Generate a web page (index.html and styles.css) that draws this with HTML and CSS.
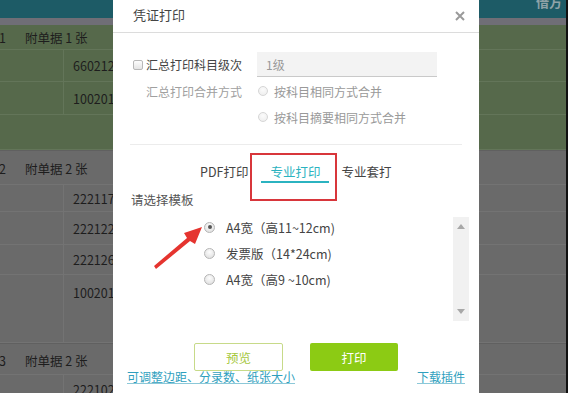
FILE: index.html
```html
<!DOCTYPE html>
<html lang="zh-CN">
<head>
<meta charset="utf-8">
<title>凭证打印</title>
<link rel="stylesheet" href="styles.css">
</head>
<body>
<div class="screen">
  <div class="bg">
    <div class="topbar"><span class="hdr-txt">借方</span></div>
    <div class="band"></div>
    <div class="grp green">
      <div class="ghead g1"><span class="vno">01</span>附单据 1 张</div>
      <div class="row r32"><div class="c1"></div><div class="c2">660212</div></div>
      <div class="row r33"><div class="c1"></div><div class="c2">100201</div></div>
      <div class="row r35"><div class="c1 noline"></div><div class="c2"></div></div>
    </div>
    <div class="grp grey">
      <div class="ghead g2"><span class="vno">02</span>附单据 2 张</div>
      <div class="row r27"><div class="c1"></div><div class="c2">222117</div></div>
      <div class="row r33"><div class="c1"></div><div class="c2">222122</div></div>
      <div class="row r30"><div class="c1"></div><div class="c2">222126</div></div>
      <div class="row r68"><div class="c1"></div><div class="c2 top">100201</div></div>
      <div class="ghead g3"><span class="vno">03</span>附单据 2 张</div>
      <div class="row r30"><div class="c1"></div><div class="c2">222102</div></div>
    </div>
  </div>

  <div class="dialog">
    <div class="dlg-head">
      <span class="dlg-title">凭证打印</span>
      <svg class="close" width="10" height="10" viewBox="0 0 10 10"><path d="M1 1 L9 9 M9 1 L1 9" stroke="#9a9a9a" stroke-width="2" fill="none"/></svg>
    </div>

    <div class="form">
      <div class="frow first">
        <span class="chk"></span>
        <span class="flabel">汇总打印科目级次</span>
        <div class="select">1级</div>
      </div>
      <div class="frow">
        <span class="flabel dim">汇总打印合并方式</span>
        <span class="radio dis"></span><span class="rtext">按科目相同方式合并</span>
      </div>
      <div class="frow">
        <span class="flabel dim"></span>
        <span class="radio dis"></span><span class="rtext">按科目摘要相同方式合并</span>
      </div>
    </div>

    <div class="sep"></div>

    <div class="tabs">
      <span class="tab t1">PDF打印</span>
      <span class="tab t2 active">专业打印</span>
      <span class="tab t3">专业套打</span>
    </div>

    <div class="choose">请选择模板</div>

    <div class="list">
      <div class="opts">
        <div class="opt"><span class="radio on"></span><span class="otext">A4宽（高11~12cm)</span></div>
        <div class="opt"><span class="radio"></span><span class="otext">发票版（14*24cm)</span></div>
        <div class="opt"><span class="radio"></span><span class="otext">A4宽（高9 ~10cm)</span></div>
      </div>
      <div class="scrollbar">
        <svg width="8" height="5" viewBox="0 0 8 5"><path d="M0 5 L4 0 L8 5 Z" fill="#a8a8a8"/></svg>
        <svg width="8" height="5" viewBox="0 0 8 5"><path d="M0 0 L8 0 L4 5 Z" fill="#a8a8a8"/></svg>
      </div>
    </div>

    <div class="btns">
      <span class="btn preview">预览</span>
      <span class="btn print">打印</span>
    </div>

    <div class="links">
      <span class="link">可调整边距、分录数、纸张大小</span>
      <span class="link">下载插件</span>
    </div>

    <div class="redbox"></div>
  </div>

  <svg class="arrow" width="568" height="393" viewBox="0 0 568 393">
    <polygon points="154,266 187,238 184,233 202,227 195,244 190,241 156,269" fill="#e5342f"/>
  </svg>
</div>
</body>
</html>
```

FILE: styles.css
```css
* { box-sizing: border-box; }
html, body { margin: 0; padding: 0; }
body {
  font-family: "Noto Sans CJK SC", "Noto Sans", sans-serif;
  background: #6a6a6a;
}
.screen {
  position: relative;
  width: 568px;
  height: 393px;
  overflow: hidden;
  border-right: 2px solid #111;
}

/* background table */
.bg { width: 100%; }
.topbar {
  height: 18px;
  background: #1d5b66;
  position: relative;
  overflow: hidden;
  display: flex;
  justify-content: flex-end;
}
.hdr-txt {
  color: #8fa3a8;
  font-size: 13px;
  font-weight: bold;
  line-height: 13px;
  margin-top: -5px;
  margin-right: 4px;
}
.band { height: 7px; background: #6f6e76; }
.grp.green { background: #56694b; }
.grp.grey { background: #6a6a6a; }
.ghead {
  display: flex;
  align-items: center;
  font-size: 12.5px;
  color: #1d1d1d;
}
.green .ghead { border-bottom: 1px solid #637559; }
.grey .ghead { border-top: 1px solid #606060; border-bottom: 1px solid #737373; }
.g1 { height: 25px; }
.g2 { height: 35px; padding-top: 2px; }
.g3 { height: 32px; padding-top: 2px; }
.vno { margin-left: -8px; width: 33px; }
.row { display: flex; }
.green .row { border-bottom: 1px solid #637559; }
.grey .row { border-bottom: 1px solid #737373; }
.r27 { height: 27px; }
.r30 { height: 30px; }
.r32 { height: 32px; }
.r33 { height: 33px; }
.r35 { height: 35px; }
.r68 { height: 68px; }
.c1 { width: 64px; border-right: 1px solid #637559; }
.grey .c1 { border-right-color: #737373; }
.c1.noline { border-right-color: transparent; }
.c2 {
  flex: 1;
  display: flex;
  align-items: center;
  padding-left: 9px;
  font-size: 12.5px;
  color: #1d1d1d;
}
.c2.top { align-items: flex-start; padding-top: 8px; }

/* dialog */
.dialog {
  position: absolute;
  left: 113px;
  top: 0;
  width: 366px;
  height: 400px;
  background: #fff;
  color: #444;
}
.dlg-head {
  height: 33px;
  border-bottom: 1px solid #dcdcdc;
  display: flex;
  align-items: center;
  justify-content: space-between;
  padding: 0 14px 3px 20px;
}
.dlg-title { font-size: 13px; color: #444; }
.close { display: block; margin-top: 2px; }

.form { padding: 19px 0 0 20px; }
.frow { display: flex; align-items: center; height: 26px; }
.frow.first { height: 25px; margin-bottom: 1px; }
.chk {
  width: 10px;
  height: 10px;
  border: 1px solid #b8b8b8;
  border-radius: 2px;
  background: linear-gradient(#fdfdfd, #e4e4e4);
  margin-right: 3px;
}
.flabel {
  width: 111px;
  font-size: 12px;
  color: #444;
}
.frow .flabel.dim { margin-left: 13px; color: #a0a0a0; width: 112px; }
.select {
  width: 180px;
  height: 25px;
  background: #f3f3f3;
  border-bottom: 1px solid #c9c9c9;
  font-size: 12px;
  color: #999;
  padding-left: 9px;
  display: flex;
  align-items: center;
}
.radio {
  width: 10px;
  height: 10px;
  border-radius: 50%;
  border: 1px solid #b5b5b5;
  background: radial-gradient(circle at 50% 35%, #fdfdfd, #dadada);
  flex: none;
  position: relative;
}
.radio.dis { border-color: #d6d6d6; background: radial-gradient(circle at 50% 35%, #fbfbfb, #ececec); }
.radio.on::after {
  content: "";
  position: absolute;
  left: 2px;
  top: 2px;
  width: 4px;
  height: 4px;
  border-radius: 50%;
  background: #555;
}
.rtext { margin-left: 6px; font-size: 12px; color: #999; }

.sep {
  margin: 14px 17px 0 17px;
  height: 1px;
  background: #ececec;
}

.tabs {
  display: flex;
  padding-left: 87px;
  margin-top: 18px;
  font-size: 12.5px;
  line-height: 18px;
}
.tab { color: #444; border-bottom: 2px solid transparent; }
.t1 { margin-right: 13px; }
.t2 { padding: 0 9px; margin-right: 12px; }
.tab.active { color: #2bb3c0; border-bottom-color: #2bb3c0; }

.choose {
  margin-top: 8px;
  padding-left: 18px;
  font-size: 12.5px;
  line-height: 18px;
  color: #555;
}

.list {
  margin: 8px 10px 0 18px;
  height: 104px;
  display: flex;
  justify-content: space-between;
}
.opts { padding-left: 73px; margin-top: -3px; }
.opt { display: flex; align-items: center; height: 26px; }
.opt .radio { width: 11px; height: 11px; }
.opt .radio.on::after { left: 2.5px; top: 2.5px; }
.otext { margin-left: 11px; font-size: 12.5px; color: #444; }
.scrollbar {
  width: 16px;
  background: #f1f1f1;
  display: flex;
  flex-direction: column;
  justify-content: space-between;
  align-items: center;
  padding: 7px 0 7px;
}
.scrollbar svg { display: block; }

.btns {
  display: flex;
  margin-top: 22px;
  padding-left: 81px;
}
.btn {
  height: 28px;
  display: flex;
  align-items: center;
  justify-content: center;
  font-size: 12.5px;
  border-radius: 2px;
}
.preview {
  width: 89px;
  border: 1px solid #c7da89;
  color: #a6c83e;
  margin-right: 27px;
}
.print {
  width: 88px;
  background: #8ccb14;
  color: #fff;
}

.links {
  display: flex;
  justify-content: space-between;
  padding: 0 14px 0 14px;
  margin-top: -1px;
  font-size: 12px;
  line-height: 14px;
}
.link { color: #2f9fbe; text-decoration: underline; text-decoration-color: #8cc8d8; }

.redbox {
  position: absolute;
  left: 137px;
  top: 153px;
  width: 87px;
  height: 48px;
  border: 2px solid #d8363b;
}

.arrow { position: absolute; left: 0; top: 0; }
```
